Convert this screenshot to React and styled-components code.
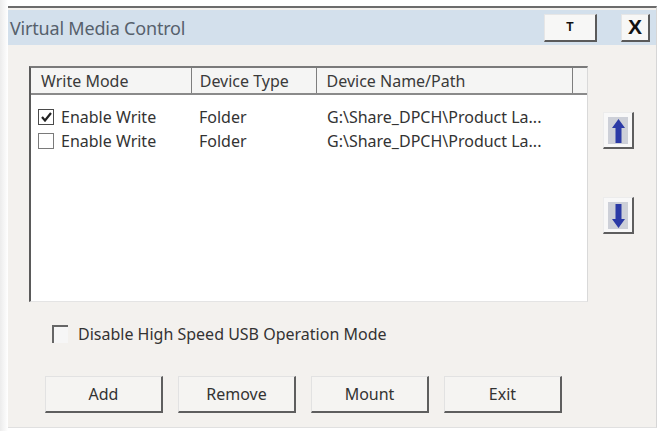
import React, { useState } from "react";
import styled, { createGlobalStyle } from "styled-components";

const GlobalStyle = createGlobalStyle`
  html, body {
    margin: 0;
    padding: 0;
    background: #ffffff;
  }
  body {
    font-family: "Noto Sans", "Open Sans", "DejaVu Sans", sans-serif;
    color: #333;
  }
`;

const Page = styled.div`
  width: 662px;
  height: 431px;
  padding: 6px 0 0 8px;
  box-sizing: border-box;
  background: linear-gradient(to right, #ececec, #ffffff 8px);
`;

const Window = styled.div`
  width: 649px;
  height: 422px;
  box-sizing: border-box;
  border-top: 2px solid #6c6c6c;
  border-right: 1px solid #d6d6d6;
  border-bottom: 1px solid #e0e0e0;
  background: #f3f1ee;
  display: flex;
  flex-direction: column;
`;

const TitleBar = styled.div`
  margin-top: 2px;
  height: 35px;
  background: #d3e0ec;
  display: flex;
  align-items: center;
  padding: 0 6px 0 2px;
  box-sizing: border-box;
`;

const Title = styled.div`
  flex: 1;
  font-size: 18px;
  color: #56616c;
  letter-spacing: -0.2px;
`;

const TitleButton = styled.button`
  width: ${(p) => p.$w}px;
  height: 28px;
  margin-left: ${(p) => p.$gap}px;
  padding: 0;
  background: #f7f7f6;
  border: none;
  border-top: 1px solid #e6e6e6;
  border-left: 1px solid #e6e6e6;
  border-right: 2px solid #5a5a5a;
  border-bottom: 2px solid #5a5a5a;
  font-family: "Liberation Sans", Arial, sans-serif;
  font-size: ${(p) => p.$size}px;
  font-weight: ${(p) => p.$weight};
  color: #111;
  display: flex;
  align-items: center;
  justify-content: center;
`;

const Body = styled.div`
  flex: 1;
  padding: 21px 0 0 21px;
  display: flex;
  flex-direction: column;
`;

const TopSection = styled.div`
  display: flex;
`;

const ListBox = styled.div`
  width: 559px;
  height: 236px;
  box-sizing: border-box;
  background: #fff;
  border-top: 2px solid #7a7a7a;
  border-left: 2px solid #5a5a5a;
  border-right: 1px solid #d9d9d9;
  border-bottom: 1px solid #e4e4e4;
  display: flex;
  flex-direction: column;
  font-size: 16px;
`;

const HeaderRow = styled.div`
  display: flex;
  height: 25px;
  background: #f5f5f4;
  border-bottom: 2px solid #8a8a8a;
`;

const HeaderCell = styled.div`
  width: ${(p) => p.$w}px;
  box-sizing: border-box;
  padding-left: ${(p) => p.$pad}px;
  border-right: ${(p) => (p.$last ? "none" : "1.5px solid #7e7e7e")};
  display: flex;
  align-items: center;
  color: #3a3a3a;
  white-space: nowrap;
`;

const Rows = styled.div`
  padding-top: 10px;
`;

const Row = styled.div`
  display: flex;
  height: 24px;
  align-items: center;
`;

const Cell = styled.div`
  width: ${(p) => p.$w}px;
  box-sizing: border-box;
  padding-left: ${(p) => p.$pad}px;
  display: flex;
  align-items: center;
  color: #333;
  white-space: nowrap;
`;

const CheckBox = styled.span`
  width: 16px;
  height: 16px;
  box-sizing: border-box;
  border: 1.5px solid ${(p) => (p.$checked ? "#4a4a4a" : "#7a7a7a")};
  background: #fff;
  margin-right: 7px;
  display: flex;
  align-items: center;
  justify-content: center;
  cursor: pointer;
`;

const SideButtons = styled.div`
  margin-left: 15px;
  padding-top: 46px;
  display: flex;
  flex-direction: column;
  gap: 48px;
`;

const ArrowButton = styled.button`
  width: 31px;
  height: 37px;
  padding: 4px 4px 3px 4px;
  background: #f8f8f8;
  border: none;
  border-top: 1px solid #ececec;
  border-left: 1px solid #ececec;
  border-right: 2px solid #5e5e5e;
  border-bottom: 2px solid #5e5e5e;
  box-sizing: border-box;
  display: flex;
`;

const ArrowFace = styled.span`
  flex: 1;
  background: #cdd0d8;
  display: flex;
  align-items: center;
  justify-content: center;
`;

const OptionRow = styled.label`
  margin-top: 21px;
  padding-left: 23px;
  display: flex;
  align-items: center;
  font-size: 16px;
  color: #333;
  cursor: pointer;
`;

const SunkenBox = styled.span`
  width: 16px;
  height: 18px;
  box-sizing: border-box;
  border-top: 2px solid #666;
  border-left: 2px solid #666;
  background: #f6f6f6;
  margin-right: 10px;
  display: flex;
  align-items: center;
  justify-content: center;
`;

const ButtonRow = styled.div`
  margin-top: 31px;
  padding-left: 16px;
  display: flex;
  gap: 15px;
`;

const DialogButton = styled.button`
  width: 118px;
  height: 37px;
  padding: 0;
  background: #f5f4f2;
  border: none;
  border-top: 1px solid #e2e2e2;
  border-left: 1px solid #e2e2e2;
  border-right: 2px solid #5e5e5e;
  border-bottom: 2px solid #5e5e5e;
  box-sizing: border-box;
  font-family: "Noto Sans", "Open Sans", sans-serif;
  font-size: 16px;
  color: #333;
`;

const Check = () => (
  <svg width="11" height="10" viewBox="0 0 11 10">
    <path d="M1 5 L4 8.5 L10 1" fill="none" stroke="#222" strokeWidth="2.2" />
  </svg>
);

const Arrow = ({ down }) => (
  <svg
    width="13"
    height="24"
    viewBox="0 0 13 24"
    style={{ transform: down ? "rotate(180deg)" : "none" }}
  >
    <path d="M6.5 0 L13 9 L9.5 9 L9.5 24 L3.5 24 L3.5 9 L0 9 Z" fill="#2b3aa6" />
  </svg>
);

const columns = [
  { w: 161, hp: 10, cp: 7, label: "Write Mode" },
  { w: 125, hp: 8, cp: 7, label: "Device Type" },
  { w: 257, hp: 10, cp: 10, label: "Device Name/Path" },
  { w: 14, hp: 0, cp: 0, label: "" },
];

const initialRows = [
  { write: true, type: "Folder", path: "G:\\Share_DPCH\\Product La..." },
  { write: false, type: "Folder", path: "G:\\Share_DPCH\\Product La..." },
];

export default function App() {
  const [rows, setRows] = useState(initialRows);
  const [highSpeed, setHighSpeed] = useState(false);

  const toggle = (i) =>
    setRows(rows.map((r, j) => (j === i ? { ...r, write: !r.write } : r)));

  return (
    <>
      <GlobalStyle />
      <Page>
        <Window>
          <TitleBar>
            <Title>Virtual Media Control</Title>
            <TitleButton $w={53} $gap={0} $size={12} $weight={700}>
              T
            </TitleButton>
            <TitleButton $w={29} $gap={24} $size={21} $weight={700}>
              X
            </TitleButton>
          </TitleBar>
          <Body>
            <TopSection>
              <ListBox>
                <HeaderRow>
                  {columns.map((c, i) => (
                    <HeaderCell
                      key={i}
                      $w={c.w}
                      $pad={c.hp}
                      $last={i === columns.length - 1}
                    >
                      {c.label}
                    </HeaderCell>
                  ))}
                </HeaderRow>
                <Rows>
                  {rows.map((r, i) => (
                    <Row key={i}>
                      <Cell $w={columns[0].w} $pad={columns[0].cp}>
                        <CheckBox $checked={r.write} onClick={() => toggle(i)}>
                          {r.write && <Check />}
                        </CheckBox>
                        Enable Write
                      </Cell>
                      <Cell $w={columns[1].w} $pad={columns[1].cp}>
                        {r.type}
                      </Cell>
                      <Cell $w={columns[2].w} $pad={columns[2].cp}>
                        {r.path}
                      </Cell>
                    </Row>
                  ))}
                </Rows>
              </ListBox>
              <SideButtons>
                <ArrowButton>
                  <ArrowFace>
                    <Arrow />
                  </ArrowFace>
                </ArrowButton>
                <ArrowButton>
                  <ArrowFace>
                    <Arrow down />
                  </ArrowFace>
                </ArrowButton>
              </SideButtons>
            </TopSection>
            <OptionRow onClick={() => setHighSpeed(!highSpeed)}>
              <SunkenBox>{highSpeed && <Check />}</SunkenBox>
              Disable High Speed USB Operation Mode
            </OptionRow>
            <ButtonRow>
              <DialogButton>Add</DialogButton>
              <DialogButton>Remove</DialogButton>
              <DialogButton>Mount</DialogButton>
              <DialogButton>Exit</DialogButton>
            </ButtonRow>
          </Body>
        </Window>
      </Page>
    </>
  );
}
